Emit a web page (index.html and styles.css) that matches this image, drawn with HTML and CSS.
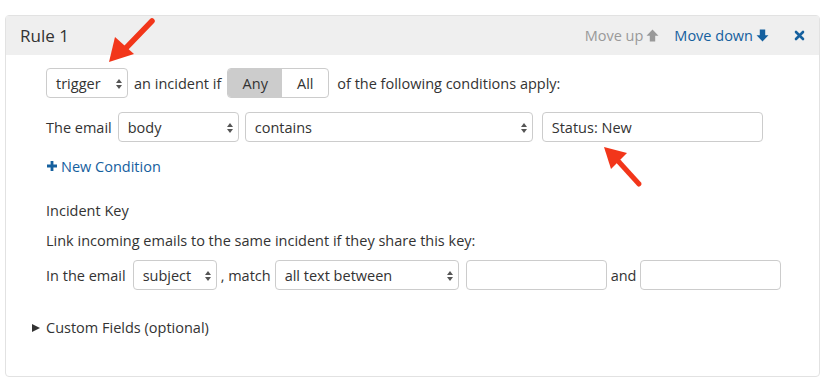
FILE: index.html
```html
<!DOCTYPE html>
<html lang="en">
<head>
    <meta charset="UTF-8">
    <title>Email rules</title>
    <link rel="stylesheet" href="styles.css">
</head>
<body>
    <div class="rule">
        <div class="rule-header">
            <h2>Rule 1</h2>
            <div class="actions">
                <span class="move disabled">Move up
                    <svg width="13" height="13" viewBox="0 0 12 12"><path d="M6 0.5 L11.5 6.3 L8.5 6.3 L8.5 11.5 L3.5 11.5 L3.5 6.3 L0.5 6.3 Z" fill="#999"/></svg>
                </span>
                <span class="move">Move down
                    <svg width="13" height="13" viewBox="0 0 12 12"><path d="M6 11.5 L11.5 5.7 L8.5 5.7 L8.5 0.5 L3.5 0.5 L3.5 5.7 L0.5 5.7 Z" fill="#15609e"/></svg>
                </span>
                <span class="remove">
                    <svg width="11" height="11" viewBox="0 0 11 11"><path d="M2 2 L9 9 M9 2 L2 9" stroke="#15609e" stroke-width="2.6" stroke-linecap="round"/></svg>
                </span>
            </div>
        </div>

        <div class="rule-body">
            <div class="row">
                <div class="select w-trigger">trigger<i class="caret"></i></div>
                <span>an incident if</span>
                <div class="toggle">
                    <span class="on">Any</span>
                    <span>All</span>
                </div>
                <span>of the following conditions apply:</span>
            </div>

            <div class="row">
                <span>The email</span>
                <div class="select w-body">body<i class="caret"></i></div>
                <div class="select w-contains">contains<i class="caret"></i></div>
                <div class="input w-status">Status: New</div>
            </div>

            <div class="new-condition">
                <svg width="12" height="12" viewBox="0 0 12 12"><path d="M6 1 V11 M1 6 H11" stroke="#15609e" stroke-width="2.8"/></svg>
                New Condition
            </div>

            <h3 class="section-title">Incident Key</h3>
            <p class="help">Link incoming emails to the same incident if they share this key:</p>

            <div class="row key-row">
                <span>In the email</span>
                <div class="select w-subject">subject<i class="caret"></i></div>
                <span class="tight">, match</span>
                <div class="select w-between">all text between<i class="caret"></i></div>
                <div class="input w-key"></div>
                <span class="tight">and</span>
                <div class="input w-key2"></div>
            </div>

            <div class="custom-fields">
                <span class="tri"></span>
                Custom Fields (optional)
            </div>
        </div>
    </div>

    <!-- annotation arrows -->
    <svg class="arrow arrow-one" width="60" height="60" viewBox="0 0 60 60">
        <path d="M47 5 L20 33" stroke="#f2361a" stroke-width="5.5" stroke-linecap="round"/>
        <path d="M4 46 L10 21 L29 38 Z" fill="#f2361a"/>
    </svg>
    <svg class="arrow arrow-two" width="50" height="50" viewBox="0 0 50 50">
        <path d="M42 42 L22 20" stroke="#f2361a" stroke-width="5" stroke-linecap="round"/>
        <path d="M7 5 L30 11 L14 27 Z" fill="#f2361a"/>
    </svg>
</body>
</html>
```

FILE: styles.css
```css
* {
    margin: 0;
    padding: 0;
    box-sizing: border-box;
}

body {
    font-family: 'Open Sans', 'Noto Sans', sans-serif;
    font-size: 14.5px;
    color: #333;
    background: white;
    padding: 15px 5px 0 5px;
}

.rule {
    border: 1px solid #e2e2e2;
    border-radius: 4px;
    height: 362px;
}

.rule-header {
    background: #efefef;
    height: 39px;
    display: flex;
    align-items: center;
    justify-content: space-between;
    padding: 0 14px 0 14px;
}

.rule-header h2 {
    font-weight: 400;
    font-size: 17px;
    color: #333;
}

.actions {
    display: flex;
    align-items: center;
}

.move {
    color: #15609e;
    display: flex;
    align-items: center;
    gap: 3px;
    margin-right: 15px;
}

.move.disabled {
    color: #999;
}

.remove {
    margin-left: 10px;
    display: flex;
}

.rule-body {
    padding: 13px 0 0 40px;
}

.row {
    display: flex;
    align-items: center;
    gap: 6px;
    height: 30px;
    margin-bottom: 14px;
}

.key-row {
    gap: 7px;
}

.row .tight {
    margin: 0 -3px;
}

.select, .input {
    height: 30px;
    border: 1px solid #ccc;
    border-radius: 4px;
    display: flex;
    align-items: center;
    padding: 0 9px;
    position: relative;
    background: white;
}

.caret {
    position: absolute;
    right: 7px;
    top: 10px;
    width: 0;
    height: 10px;
}

.caret::before, .caret::after {
    content: "";
    position: absolute;
    left: -4px;
    border-left: 3.5px solid transparent;
    border-right: 3.5px solid transparent;
}

.caret::before {
    top: 0;
    border-bottom: 4px solid #555;
}

.caret::after {
    top: 6px;
    border-top: 4px solid #555;
}

.w-trigger { width: 82px; }
.w-body { width: 121px; }
.w-contains { width: 288px; }
.w-status { width: 221px; margin-left: 3px; }
.w-subject { width: 84px; }
.w-between { width: 184px; }
.w-key { width: 141px; }
.w-key2 { width: 141px; }

.toggle {
    display: flex;
    height: 30px;
    border: 1px solid #ccc;
    border-radius: 4px;
    overflow: hidden;
    margin: 0 2px 0 0;
}

.toggle span {
    width: 46px;
    display: flex;
    align-items: center;
    justify-content: center;
}

.toggle .on {
    background: #ccc;
    width: 54px;
}

.new-condition {
    color: #15609e;
    display: flex;
    align-items: center;
    gap: 3px;
    margin-top: 9px;
    height: 20px;
}

.section-title {
    font-weight: 400;
    font-size: 14.5px;
    margin-top: 25px;
    height: 20px;
}

.help {
    margin-top: 10px;
    height: 20px;
    margin-bottom: 9px;
}

.custom-fields {
    display: flex;
    align-items: center;
    margin: 28px 0 0 -14px;
    gap: 6px;
}

.tri {
    width: 0;
    height: 0;
    border-top: 4.5px solid transparent;
    border-bottom: 4.5px solid transparent;
    border-left: 8px solid #333;
}

.arrow {
    position: absolute;
}

.arrow-one {
    left: 105px;
    top: 16px;
}

.arrow-two {
    left: 597px;
    top: 142px;
}
```
